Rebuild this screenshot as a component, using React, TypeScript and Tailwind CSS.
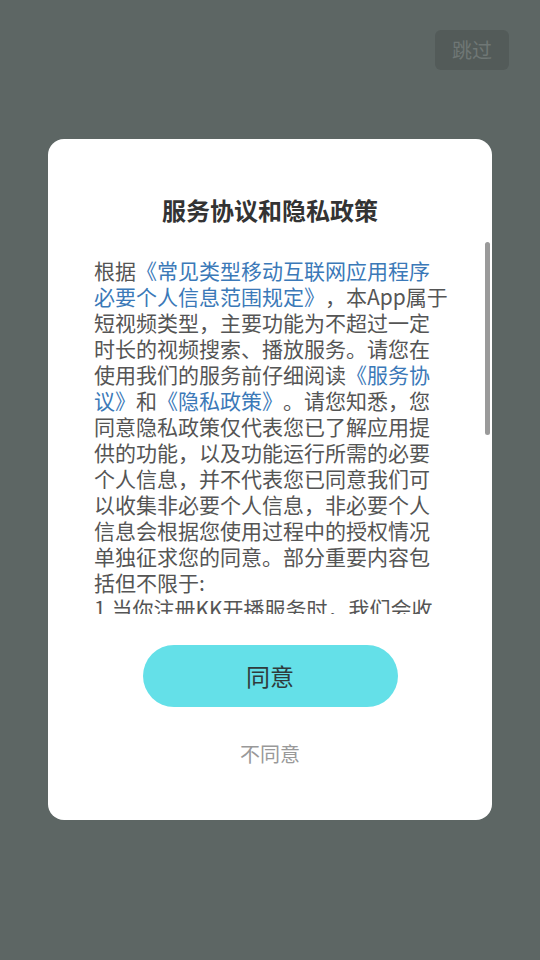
import React from 'react';

const font = { fontFamily: '"Noto Sans CJK SC", "Noto Sans", sans-serif' };

type Seg = { t: string; link?: boolean };

const lines: Seg[][] = [
  [{ t: '根据' }, { t: '《常见类型移动互联网应用程序', link: true }],
  [{ t: '必要个人信息范围规定》', link: true }, { t: '，本App属于' }],
  [{ t: '短视频类型，主要功能为不超过一定' }],
  [{ t: '时长的视频搜索、播放服务。请您在' }],
  [{ t: '使用我们的服务前仔细阅读' }, { t: '《服务协', link: true }],
  [{ t: '议》', link: true }, { t: '和' }, { t: '《隐私政策》', link: true }, { t: '。请您知悉，您' }],
  [{ t: '同意隐私政策仅代表您已了解应用提' }],
  [{ t: '供的功能，以及功能运行所需的必要' }],
  [{ t: '个人信息，并不代表您已同意我们可' }],
  [{ t: '以收集非必要个人信息，非必要个人' }],
  [{ t: '信息会根据您使用过程中的授权情况' }],
  [{ t: '单独征求您的同意。部分重要内容包' }],
  [{ t: '括但不限于:' }],
  [{ t: '1.当你注册KK开播服务时，我们会收' }],
  [{ t: '集你的手机号码，用于帐号注册登录' }],
];

export default function App() {
  return (
    <div className="w-[540px] h-[960px] bg-[#5d6664] flex flex-col" style={font}>
      {/* top bar with skip */}
      <div className="flex justify-end pt-[30px] pr-[31px]">
        <div className="w-[74px] h-[40px] rounded-md bg-[#535b59] flex items-center justify-center text-[20px] text-[#6f7775]">
          跳过
        </div>
      </div>

      {/* dialog */}
      <div className="relative mt-[69px] mx-[48px] h-[681px] bg-white rounded-[16px] flex flex-col items-center">
        <div className="mt-[50px] h-[42px] flex items-center text-[24px] font-bold text-[#333333]">
          服务协议和隐私政策
        </div>

        <div className="mt-[26px] w-full h-[357px] overflow-hidden pl-[46px]">
          <div className="text-[21px] leading-[26px] text-[#555555] whitespace-nowrap [text-spacing-trim:space-all]">
            {lines.map((line, i) => (
              <div key={i}>
                {line.map((s, j) => (
                  <span key={j} className={s.link ? 'text-[#3b79b8]' : ''}>
                    {s.t}
                  </span>
                ))}
              </div>
            ))}
          </div>
        </div>

        {/* scrollbar */}
        <div className="absolute right-[2px] top-[103px] w-[5px] h-[193px] rounded-full bg-[#9a9a9a]" />

        <button className="mt-[31px] w-[255px] h-[62px] rounded-full bg-[#64e0e8] text-[24px] text-[#2f3b3c] flex items-center justify-center">
          同意
        </button>

        <div className="mt-[32px] text-[20px] text-[#999999]">不同意</div>
      </div>
    </div>
  );
}
